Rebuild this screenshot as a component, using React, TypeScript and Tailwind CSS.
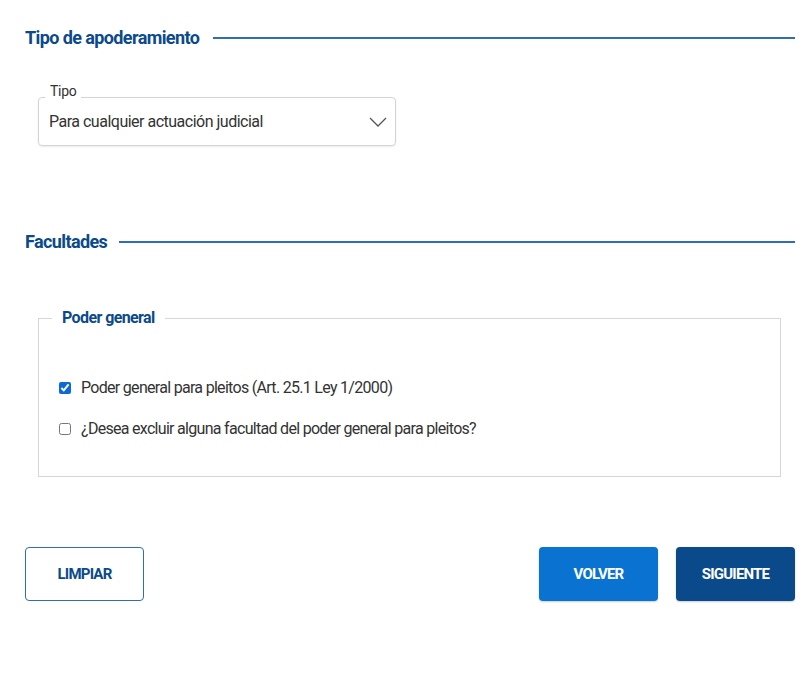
export default function App() {
  const font = "font-['Roboto','Liberation_Sans',sans-serif]"

  return (
    <div className={`w-[812px] h-[677px] bg-white pl-[25px] pr-[17px] pt-[26px] ${font}`}>
      {/* Tipo de apoderamiento */}
      <div className="flex items-center gap-[14px] h-[24px]">
        <h2 className="text-[18px] tracking-[-0.6px] font-bold text-[#0b4a8a] leading-none">Tipo de apoderamiento</h2>
        <div className="flex-1 h-[1.5px] bg-[#2f6db5]" />
      </div>

      <div className="relative ml-[13px] mt-[47px] w-[358px] h-[49px] rounded-[4px] border border-[#d4d4d4] shadow-[0_1px_2px_rgba(0,0,0,0.08)] flex items-center px-[10px]">
        <span className="absolute -top-[18px] left-[6px] bg-white px-[5px] text-[14px] tracking-[-0.3px] text-[#333] leading-[22px]">Tipo</span>
        <span className="text-[16px] tracking-[-0.5px] text-[#333] flex-1">Para cualquier actuación judicial</span>
        <svg width="18" height="10" viewBox="0 0 18 10" fill="none" className="mr-[-2px]">
          <path d="M1 1l8 8 8-8" stroke="#555" strokeWidth="1.3" />
        </svg>
      </div>

      {/* Facultades */}
      <div className="flex items-center gap-[12px] h-[24px] mt-[84px]">
        <h2 className="text-[18px] tracking-[-0.6px] font-bold text-[#0b4a8a] leading-none">Facultades</h2>
        <div className="flex-1 h-[1.5px] bg-[#2f6db5]" />
      </div>

      <fieldset className="ml-[13px] mt-[52px] w-[743px] h-[171px] border border-[#d6d6d6] p-0">
        <legend className="ml-[13px] px-[10px] text-[16px] tracking-[-0.6px] font-bold text-[#0b4a8a]">Poder general</legend>
        <div className="px-[20px] pt-[46px]">
          <label className="flex items-center gap-[10px] h-[24px]">
            <input type="checkbox" defaultChecked className="w-[12px] h-[12px] accent-[#0b6bd3]" />
            <span className="text-[16px] tracking-[-0.7px] text-[#333]">Poder general para pleitos (Art. 25.1 Ley 1/2000)</span>
          </label>
          <label className="flex items-center gap-[10px] h-[24px] mt-[17px]">
            <input type="checkbox" className="w-[12px] h-[12px] accent-[#0b6bd3]" />
            <span className="text-[16px] tracking-[-0.7px] text-[#333]">¿Desea excluir alguna facultad del poder general para pleitos?</span>
          </label>
        </div>
      </fieldset>

      {/* Botones */}
      <div className="flex items-center mt-[70px]">
        <button className="w-[119px] h-[54px] rounded-[4px] border border-[#2f6db5] text-[15px] tracking-[-0.8px] font-bold text-[#0b4a8a]">LIMPIAR</button>
        <div className="flex-1" />
        <button className="w-[119px] h-[54px] rounded-[4px] bg-[#0a72d1] text-[15px] tracking-[-0.8px] font-bold text-white shadow-[0_1px_2px_rgba(0,0,0,0.2)]">VOLVER</button>
        <button className="ml-[18px] w-[119px] h-[54px] rounded-[4px] bg-[#0b4a8a] text-[15px] tracking-[-0.8px] font-bold text-white shadow-[0_1px_2px_rgba(0,0,0,0.2)]">SIGUIENTE</button>
      </div>
    </div>
  )
}
